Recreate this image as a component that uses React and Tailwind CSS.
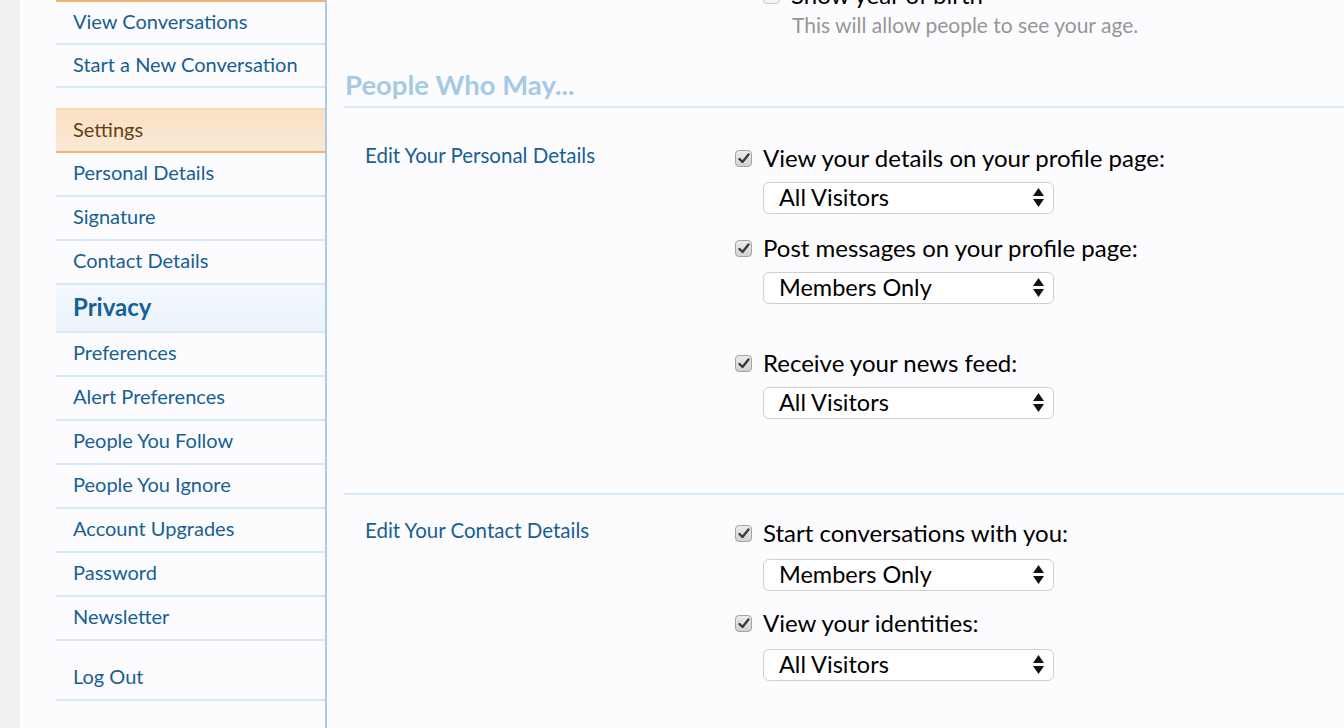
import React from 'react'

const font = "font-['Lato',sans-serif]"

function NavRow({ label, bold, h = 'h-[44px]' }) {
  return (
    <div
      className={
        'flex items-center pl-[17px] border-b-2 border-[#d7e9f7] ' +
        (bold
          ? 'h-[48px] pb-[3px] bg-gradient-to-b from-[#f3f8fd] to-[#eaf3fc] text-[24px] font-bold text-[#176093]'
          : h + ' pb-[4px] text-[20px] text-[#176093]')
      }
    >
      {label}
    </div>
  )
}

function Checkbox() {
  return (
    <span className="flex h-[17px] w-[17px] shrink-0 items-center justify-center rounded-[4px] border border-[#a3a3a3] bg-gradient-to-b from-[#ececec] to-[#d2d2d2]">
      <svg width="12" height="11" viewBox="0 0 12 11">
        <path d="M1.5 6 L4.5 9 L10.5 1.5" fill="none" stroke="#3a3a3a" strokeWidth="2.4" strokeLinejoin="round" strokeLinecap="round" />
      </svg>
    </span>
  )
}

function Select({ value }) {
  return (
    <div className="flex h-[32px] w-[291px] items-center justify-between rounded-[6px] border border-[#cfcfcf] bg-white pl-[15px] pr-[9px] text-[23.5px] text-black">
      <span>{value}</span>
      <svg width="11" height="20" viewBox="0 0 11 20">
        <path d="M5.5 0 L11 8 L0 8 Z" fill="#111" />
        <path d="M0 11 L11 11 L5.5 19 Z" fill="#111" />
      </svg>
    </div>
  )
}

function Option({ label, value, gap, selGap = 'mt-[9px]' }) {
  return (
    <div className={gap}>
      <div className="flex h-[30px] items-center gap-[11px] text-[24px] text-black">
        <Checkbox />
        <span>{label}</span>
      </div>
      <div className={selGap + ' pl-[28px]'}>
        <Select value={value} />
      </div>
    </div>
  )
}

export default function App() {
  const top = ['View Conversations', 'Start a New Conversation']
  const settings = ['Personal Details', 'Signature', 'Contact Details']
  const rest = [
    'Preferences',
    'Alert Preferences',
    'People You Follow',
    'People You Ignore',
    'Account Upgrades',
    'Password',
    'Newsletter',
  ]

  return (
    <div className={'flex h-[728px] w-[1344px] overflow-hidden bg-[#fcfcff] ' + font}>
      <div className="w-[20px] shrink-0 bg-[#f0f0f0]" />

      {/* sidebar */}
      <div className="ml-[36px] w-[271px] shrink-0 border-r-2 border-[#a7cbe6]">
        <div className="h-[2px] bg-[#f3b36c]" />
        {top.map((t) => (
          <NavRow key={t} label={t} h="h-[43px]" />
        ))}
        <div className="mt-[20px] flex h-[45px] items-center border-t border-[#f6d6ae] border-b-2 border-b-[#f2b468] bg-gradient-to-b from-[#f9e0c3] to-[#fbe9d7] pb-[3px] pl-[17px] text-[20px] text-[#63400f]">
          Settings
        </div>
        {settings.map((t) => (
          <NavRow key={t} label={t} />
        ))}
        <NavRow label="Privacy" bold />
        {rest.map((t) => (
          <NavRow key={t} label={t} />
        ))}
        <div className="mt-[16px]">
          <NavRow label="Log Out" />
        </div>
      </div>

      {/* main */}
      <div className="flex-1 pl-[17px]">
        <div className="-mt-[20px] pl-[419px]">
          <div className="flex h-[30px] items-center gap-[11px] text-[24px] text-black">
            <span className="h-[17px] w-[17px] rounded-[4px] border border-[#c8c8c8] bg-[#f4f4f4]" />
            <span>Show year of birth</span>
          </div>
          <div className="pl-[29px] text-[21px] leading-[30px] text-[#969696]">
            This will allow people to see your age.
          </div>
        </div>

        <h2 className="mt-[30px] border-b-2 border-[#d7e9f7] pb-[6px] pl-[1px] text-[27.5px] font-bold leading-[30px] text-[#a5cae4]">
          People Who May...
        </h2>

        <div className="flex border-b-2 border-[#d7e9f7] pb-[74px] pt-[35px]">
          <div className="w-[391px] shrink-0 pl-[21px] text-[20.5px] leading-[24px] text-[#176093]">
            Edit Your Personal Details
          </div>
          <div>
            <Option label="View your details on your profile page:" value="All Visitors" />
            <Option label="Post messages on your profile page:" value="Members Only" gap="mt-[19px]" />
            <Option label="Receive your news feed:" value="All Visitors" gap="mt-[44px]" />
          </div>
        </div>

        <div className="flex pt-[23px]">
          <div className="w-[391px] shrink-0 pl-[21px] text-[20.5px] leading-[24px] text-[#176093]">
            Edit Your Contact Details
          </div>
          <div>
            <Option label="Start conversations with you:" value="Members Only" selGap="mt-[11px]" />
            <Option label="View your identities:" value="All Visitors" gap="mt-[17px]" selGap="mt-[11px]" />
          </div>
        </div>
      </div>
    </div>
  )
}
